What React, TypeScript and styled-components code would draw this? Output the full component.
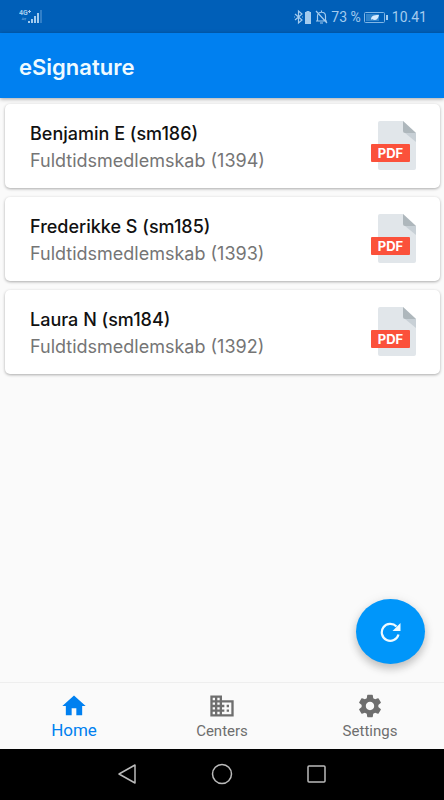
import React from "react";
import styled, { createGlobalStyle } from "styled-components";
import { MdHome, MdDomain, MdSettings } from "react-icons/md";

const GlobalStyle = createGlobalStyle`
  *, *::before, *::after { box-sizing: border-box; }
  body { margin: 0; background: #fafafa; }
  button { font: inherit; color: inherit; background: none; border: 0; padding: 0; cursor: pointer; }
  svg { display: block; }
`;

const Screen = styled.div`
  display: flex;
  flex-direction: column;
  min-height: 100vh;
  background: #fafafa;
  font-family: Roboto, "Liberation Sans", sans-serif;
`;

const StatusBar = styled.div`
  display: flex;
  justify-content: space-between;
  align-items: center;
  height: 33px;
  padding: 0 17px 0 19px;
  background: #005fb8;
  color: #a3cbee;
  font-size: 14px;
  line-height: 16px;
`;

const StatusGroup = styled.div`
  display: flex;
  align-items: center;
  gap: 3px;
`;

const AppBar = styled.header`
  display: flex;
  align-items: center;
  height: 65px;
  padding: 2px 19px 0;
  background: #0080f0;
  color: #eefaff;
  box-shadow: 0 1px 4px rgba(0, 0, 0, 0.35);
`;

const AppTitle = styled.h1`
  margin: 0;
  font-family: Inter, "Liberation Sans", sans-serif;
  font-size: 22px;
  line-height: 28px;
  font-weight: 600;
`;

const Main = styled.main`
  position: relative;
  flex: 1;
  padding: 6px 4px 0 5px;
`;

const DocumentList = styled.ul`
  display: flex;
  flex-direction: column;
  gap: 9px;
  margin: 0;
  padding: 0;
  list-style: none;
`;

const DocumentCard = styled.li`
  display: flex;
  justify-content: space-between;
  align-items: center;
  height: 84px;
  padding: 0 23px 0 25px;
  border-radius: 5px;
  background: #fff;
  box-shadow: 0 1px 3px rgba(0, 0, 0, 0.32);
  font-family: Inter, "Liberation Sans", sans-serif;
`;

const DocumentText = styled.div`
  padding-top: 2px;
`;

const MemberName = styled.h2`
  margin: 0;
  color: #111;
  font-size: 18px;
  line-height: 27px;
  font-weight: 500;
`;

const Membership = styled.p`
  margin: 0;
  color: #757575;
  font-size: 18px;
  line-height: 27px;
`;

const RefreshButton = styled.button`
  position: absolute;
  right: 19px;
  bottom: 18px;
  display: grid;
  place-items: center;
  width: 69px;
  height: 65px;
  border-radius: 50%;
  && { background: #0096fa; }
  color: #eefaff;
  box-shadow: 0 5px 9px rgba(0, 0, 0, 0.2), 0 1px 12px rgba(0, 0, 0, 0.08);
`;

const TabBar = styled.nav`
  display: grid;
  grid-template-columns: repeat(3, 1fr);
  height: 67px;
  border-top: 1px solid #eee;
  background: #fafafa;
`;

const Tab = styled.button<{ $active?: boolean }>`
  && {
    display: flex;
    flex-direction: column;
    align-items: center;
    padding-top: 9px;
    color: ${({ $active }) => ($active ? "#0080f0" : "#6e6e6e")};
    font-size: ${({ $active }) => ($active ? "17px" : "15px")};
    line-height: ${({ $active }) => ($active ? "20px" : "22px")};
  }
`;

const SystemBar = styled.div`
  display: flex;
  justify-content: center;
  gap: 70px;
  padding: 13px 0 14px;
  background: #000;
  color: #bbb;
`;

const SystemButton = styled.button`
  width: 24px;
  height: 24px;
`;

function SignalIcon() {
  return (
    <svg width="24" height="16" viewBox="0 0 24 16" fill="currentColor" aria-label="4G+ signal">
      <text x="0" y="6" fontSize="7" fontWeight="700">4G</text>
      <path d="M9 2h3v1H9zM10 1h1v3h-1z" />
      <path d="M4 8l1.5 3H2.500zM6 12l1.500-3H5z" opacity=".4" />
      <path d="M9 12h2v2H9zM12 10h2v4h-2zM15 7h2v7h-2zM18 4h2v10h-2z" />
      <path d="M21 1h2v13h-2z" opacity=".3" />
    </svg>
  );
}

function BluetoothBatteryIcon() {
  return (
    <svg width="19" height="16" viewBox="0 0 19 16" fill="none" stroke="currentColor" aria-label="Bluetooth">
      <path d="M2 5l7 6-3.500 3V2L9 5l-7 6M1 8h.8M9.200 8h.8" strokeWidth="1.200" />
      <path d="M12 3h1.500V2h3v1H18v12h-6z" fill="currentColor" stroke="none" />
    </svg>
  );
}

function MutedBellIcon() {
  return (
    <svg width="13" height="16" viewBox="0 0 13 16" fill="none" stroke="currentColor" strokeWidth="1.200" aria-label="Muted">
      <path d="M1 12h11M2.500 12V7c0-5 8-5 8 0v5M6.500 3V1.500M5 14h3M1 2l11 12" />
    </svg>
  );
}

function BatteryIcon() {
  return (
    <svg width="25" height="16" viewBox="0 0 25 16" fill="none" stroke="currentColor" aria-label="Battery">
      <rect x=".5" y="3.500" width="20" height="10" rx="1" stroke="#7fb5e5" />
      <path d="M2 5h13v7H2z" fill="#2f83cb" stroke="none" />
      <path d="M7 11c0-4 2-5 8-5-1 5-4 6-7 4z" fill="#d4eaff" stroke="none" />
      <path d="M23 6v5" strokeWidth="2" />
    </svg>
  );
}

function PdfIcon() {
  return (
    <svg width="46" height="50" viewBox="0 0 46 50" role="img" aria-label="PDF">
      <path d="M9 0h23l13 12v35a2 2 0 0 1-2 2H9a2 2 0 0 1-2-2V2a2 2 0 0 1 2-2z" fill="#e1e6ea" />
      <path d="M34 12h11v9z" fill="#c8d0d6" />
      <path d="M32 0l13 12H34a2 2 0 0 1-2-2z" fill="#aeb7bc" />
      <rect y="23" width="39" height="18" rx="1" fill="#fb513b" />
      <text x="19.500" y="37" textAnchor="middle" fill="#fff" fontFamily="Inter, sans-serif" fontSize="13" fontWeight="700">PDF</text>
    </svg>
  );
}

function RefreshIcon() {
  return (
    <svg width="22" height="20" viewBox="1 0 22 20" fill="none" stroke="currentColor" strokeWidth="2.200" aria-hidden="true">
      <path d="M17.500 4.500A8.500 8.500 0 1 0 19.500 12.500" />
      <path d="M21.500 1v8h-8z" fill="currentColor" stroke="none" />
    </svg>
  );
}

const documents = [
  { name: "Benjamin E (sm186)", membership: "Fuldtidsmedlemskab (1394)" },
  { name: "Frederikke S (sm185)", membership: "Fuldtidsmedlemskab (1393)" },
  { name: "Laura N (sm184)", membership: "Fuldtidsmedlemskab (1392)" },
];

const tabs = [
  { label: "Home", Icon: MdHome, active: true },
  { label: "Centers", Icon: MdDomain, active: false },
  { label: "Settings", Icon: MdSettings, active: false },
];

export default function App() {
  return (
    <Screen>
      <GlobalStyle />
      <StatusBar>
        <SignalIcon />
        <StatusGroup>
          <BluetoothBatteryIcon />
          <MutedBellIcon />
          <span>73 %</span>
          <BatteryIcon />
          <time>10.41</time>
        </StatusGroup>
      </StatusBar>
      <AppBar>
        <AppTitle>eSignature</AppTitle>
      </AppBar>
      <Main>
        <DocumentList>
          {documents.map(({ name, membership }) => (
            <DocumentCard key={name}>
              <DocumentText>
                <MemberName>{name}</MemberName>
                <Membership>{membership}</Membership>
              </DocumentText>
              <PdfIcon />
            </DocumentCard>
          ))}
        </DocumentList>
        <RefreshButton type="button" aria-label="Refresh">
          <RefreshIcon />
        </RefreshButton>
      </Main>
      <TabBar>
        {tabs.map(({ label, Icon, active }) => (
          <Tab key={label} type="button" $active={active} aria-current={active ? "page" : undefined}>
            <Icon size={28} aria-hidden="true" />
            {label}
          </Tab>
        ))}
      </TabBar>
      <SystemBar>
        <SystemButton type="button" aria-label="Back">
          <svg width="24" height="24" viewBox="0 0 24 24" fill="none" stroke="currentColor" strokeWidth="1.500" strokeLinejoin="round">
            <path d="M19 3v18L3 12z" />
          </svg>
        </SystemButton>
        <SystemButton type="button" aria-label="Home screen">
          <svg width="24" height="24" viewBox="0 0 24 24" fill="none" stroke="currentColor" strokeWidth="1.500">
            <circle cx="12" cy="12" r="9.500" />
          </svg>
        </SystemButton>
        <SystemButton type="button" aria-label="Recent apps">
          <svg width="24" height="24" viewBox="0 0 24 24" fill="none" stroke="currentColor" strokeWidth="1.500">
            <rect x="4" y="4" width="17" height="16" rx="1" />
          </svg>
        </SystemButton>
      </SystemBar>
    </Screen>
  );
}
